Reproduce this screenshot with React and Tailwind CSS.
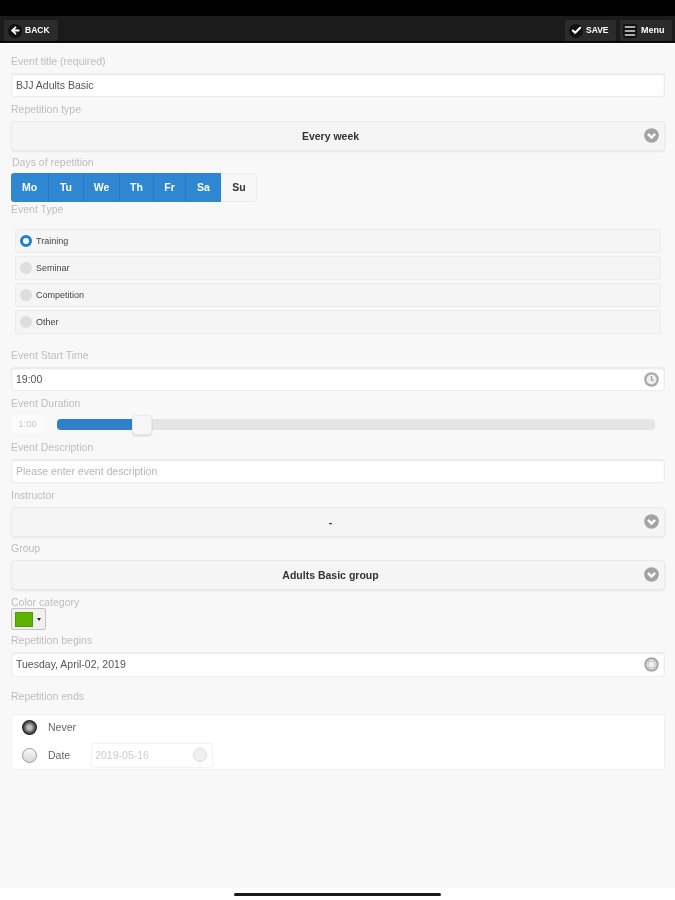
import { ArrowLeft, Check, Menu } from "lucide-react";

const font = "font-['Liberation_Sans',Arial,sans-serif]";

const Label = ({ className = "", children }) => (
  <div className={`h-3 text-[10.5px] leading-3 text-[#bdbdbd] ${className}`}>{children}</div>
);

const TextBox = ({ className = "", children, icon }) => (
  <div className={`flex h-[24px] items-center justify-between rounded-[3px] border border-[#ececec] bg-white pl-1 pr-[5px] text-[10.5px] text-[#555] shadow-[inset_0_1px_2px_rgba(0,0,0,0.1)] ${className}`}>
    <span className="pt-[1px]">{children}</span>
    {icon}
  </div>
);

const Chevron = () => (
  <svg width="15" height="15" viewBox="0 0 16 16">
    <circle cx="8" cy="8" r="7.8" fill="#a3a3a3" />
    <path d="M4.2 6.3 8 10.2l3.8-3.9" fill="none" stroke="#fff" strokeWidth="2.6" />
  </svg>
);

const SelectBox = ({ className = "", children }) => (
  <div className={`relative flex h-[30px] items-center justify-center rounded-[4px] border border-[#e9e9e9] bg-[#f5f5f5] text-[10.5px] font-bold text-[#333] shadow-[0_1px_2px_rgba(0,0,0,0.08)] ${className}`}>
    <span className="pr-[15px] pt-[2px]">{children}</span>
    <div className="absolute right-[5px] top-[6px]">
      <Chevron />
    </div>
  </div>
);

const ClockIcon = () => (
  <svg width="15" height="15" viewBox="0 0 15 15">
    <circle cx="7.5" cy="7.5" r="6.2" fill="#eee" stroke="#a8a8a8" strokeWidth="2.2" />
    <path d="M7.5 4v4.2h2.6" fill="none" stroke="#9a9a9a" strokeWidth="1.1" />
  </svg>
);

const CalendarIcon = () => (
  <svg width="15" height="15" viewBox="0 0 15 15">
    <circle cx="7.5" cy="7.5" r="6.2" fill="#e4e4e4" stroke="#aaa" strokeWidth="2.2" />
    <rect x="4.2" y="4.5" width="6.6" height="6" fill="#f0f0f0" stroke="#bbb" strokeWidth="0.7" />
  </svg>
);

const days = [
  { name: "Mo", width: "w-[38px] rounded-l-[3px]" },
  { name: "Tu", width: "w-[35px]" },
  { name: "We", width: "w-[36px]" },
  { name: "Th", width: "w-[34px]" },
  { name: "Fr", width: "w-[32px]" },
  { name: "Sa", width: "w-[35px] border-r-0" },
];
const eventTypes = ["Seminar", "Competition", "Other"];

const App = () => {
  return (
    <div className={`flex h-[900px] w-[675px] flex-col overflow-hidden bg-white blur-[0.6px] ${font}`}>
      <div className="h-4 shrink-0 bg-black" />

      {/* top bar */}
      <div className="flex h-[27px] shrink-0 items-start justify-between border-b-2 border-[#0a0a0a] bg-[#1b1b1b] pl-1 pr-[3px] pt-1">
        <div className="flex h-[21px] w-[54px] items-center rounded-[2px] bg-[#2b2b2b] pl-[4px]">
          <div className="flex h-[14px] w-[14px] items-center justify-center rounded-full bg-[#111]">
            <ArrowLeft size={11} color="#fff" strokeWidth={4} />
          </div>
          <span className="ml-[3px] text-[8.5px] font-bold text-white">BACK</span>
        </div>
        <div className="flex gap-[4px]">
          <div className="flex h-[21px] w-[51px] items-center rounded-[2px] bg-[#2b2b2b] pl-[4px]">
            <div className="flex h-[14px] w-[14px] items-center justify-center rounded-full bg-[#111]">
              <Check size={11} color="#fff" strokeWidth={4.5} />
            </div>
            <span className="ml-[3px] text-[8.5px] font-bold text-white">SAVE</span>
          </div>
          <div className="flex h-[21px] w-[52px] items-center rounded-[2px] bg-[#2b2b2b] pl-[3px]">
            <div className="flex h-[14px] w-[14px] items-center justify-center rounded-[3px] bg-[#111]">
              <Menu size={14} color="#ddd" strokeWidth={2.5} />
            </div>
            <span className="ml-[4px] text-[9px] font-bold text-white">Menu</span>
          </div>
        </div>
      </div>

      {/* form */}
      <div className="h-[845px] shrink-0 border-t border-white bg-[#f8f8f8] pl-[11px] pr-[10px]">
        <Label className="mt-[11px]">Event title (required)</Label>
        <TextBox className="mt-[6px]">BJJ Adults Basic</TextBox>
        <Label className="mt-[6px]">Repetition type</Label>
        <SelectBox className="mt-[6px]">Every week</SelectBox>
        <Label className="ml-[1px] mt-[5px]">Days of repetition</Label>

        <div className="mt-[5px] flex h-[29px] w-[246px] text-[10.5px] font-bold">
          {days.map((day) => (
            <div
              key={day.name}
              className={`flex items-center justify-center border-r border-[#2a78bd] bg-[#2f86d1] text-white ${day.width}`}
            >
              {day.name}
            </div>
          ))}
          <div className="flex w-[36px] shrink-0 items-center justify-center rounded-r-[3px] border border-[#eeeeee] bg-[#f6f6f6] text-[#333]">
            Su
          </div>
        </div>

        <Label className="mt-[1px]">Event Type</Label>

        <div className="ml-[4px] mr-[4px] mt-[14px] flex flex-col gap-[3px]">
          <div className="flex h-[24px] items-center rounded-[2px] border border-[#ececec] bg-[#f5f5f5] pl-[4px] text-[9px] text-[#444]">
            <div className="h-[12px] w-[12px] rounded-full border-[3px] border-[#1f7fcb] bg-white" />
            <span className="ml-[4px] pt-[2px]">Training</span>
          </div>
          {eventTypes.map((type) => (
            <div
              key={type}
              className="flex h-[24px] items-center rounded-[2px] border border-[#ececec] bg-[#f5f5f5] pl-[4px] text-[9px] text-[#444]"
            >
              <div className="h-[12px] w-[12px] rounded-full bg-[#dedede]" />
              <span className="ml-[4px] pt-[2px]">{type}</span>
            </div>
          ))}
        </div>

        <Label className="mt-[15px]">Event Start Time</Label>
        <TextBox className="mt-[6px]" icon={<ClockIcon />}>19:00</TextBox>
        <Label className="mt-[6px]">Event Duration</Label>

        <div className="mt-[5px] flex h-[20px] items-center">
          <div className="ml-[1px] flex h-[18px] w-[31px] items-center justify-center rounded-[2px] bg-[#fbfbfb] text-[9.5px] text-[#c8c8c8]">1:00</div>
          <div className="relative ml-[14px] h-[11px] w-[598px] rounded-[4px] bg-[#e5e5e5]">
            <div className="h-full w-[76px] rounded-l-[4px] bg-[#2f80c9]" />
            <div className="absolute left-[75px] top-[-4px] h-[20px] w-[20px] rounded-[4px] border border-[#eaeaea] bg-[#f6f6f6] shadow-[0_1px_2px_rgba(0,0,0,0.15)]" />
          </div>
        </div>

        <Label className="mt-[7px]">Event Description</Label>
        <TextBox className="mt-[6px] !text-[#b5b5b5]">Please enter event description</TextBox>
        <Label className="mt-[6px]">Instructor</Label>
        <SelectBox className="mt-[6px]">-</SelectBox>
        <Label className="mt-[5px]">Group</Label>
        <SelectBox className="mt-[6px]">Adults Basic group</SelectBox>
        <Label className="mt-[6px]">Color category</Label>

        <div className="flex h-[22px] w-[35px] items-center rounded-[2px] border border-[#c4c4c4] bg-[#f0f0f0] pl-[3px]">
          <div className="h-[15px] w-[18px] border border-[#4f9a00] bg-[#5cb300]" />
          <div className="ml-[4px] h-0 w-0 border-x-[2px] border-t-[3px] border-x-transparent border-t-[#222]" />
        </div>

        <Label className="mt-[4px]">Repetition begins</Label>
        <TextBox className="mt-[6px] !h-[25px]" icon={<CalendarIcon />}>Tuesday, April-02, 2019</TextBox>
        <Label className="mt-[13px]">Repetition ends</Label>

        <div className="mt-[12px] h-[56px] rounded-[3px] border border-[#f0f0f0] bg-white text-[10.5px] text-[#666]">
          <div className="flex h-[24px] items-center pl-[10px]">
            <div className="flex h-[15px] w-[15px] items-center justify-center rounded-full bg-[radial-gradient(circle,#bbbbbb_20%,#222222_65%)]" />
            <span className="ml-[11px] pt-[1px]">Never</span>
          </div>
          <div className="mt-[1px] flex h-[30px] items-center pl-[10px]">
            <div className="h-[15px] w-[15px] rounded-full border border-[#999] bg-gradient-to-b from-[#f8f8f8] to-[#d8d8d8]" />
            <span className="ml-[11px] pt-[1px]">Date</span>
            <div className="ml-[21px] flex h-[25px] w-[122px] items-center justify-between rounded-[3px] border border-[#f3f3f3] pl-[3px] pr-[5px] text-[#cccccc]">
              <span className="pt-[1px]">2019-05-16</span>
              <div className="h-[14px] w-[14px] rounded-full border border-[#dddddd] bg-[#f0f0f0]" />
            </div>
          </div>
        </div>
      </div>

      {/* home indicator */}
      <div className="flex flex-1 justify-center bg-white pt-[5px]">
        <div className="h-[3px] w-[207px] rounded-full bg-[#1a1a1a]" />
      </div>
    </div>
  );
};

export default App;
